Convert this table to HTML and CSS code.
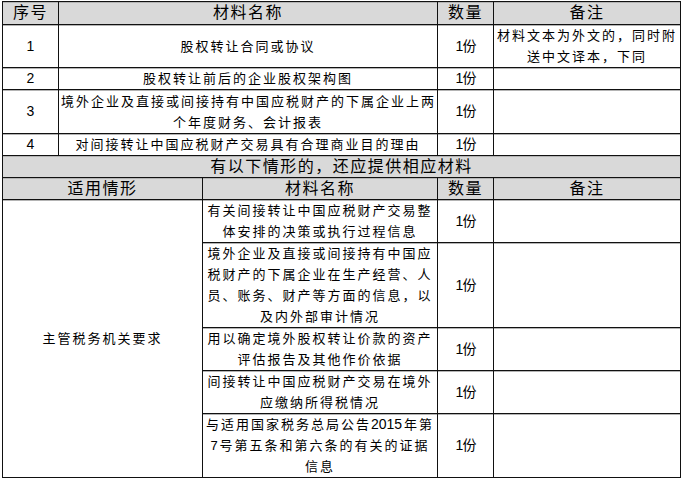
FILE: index.html
```html
<!DOCTYPE html>
<html lang="zh-CN">
<head>
<meta charset="utf-8">
<title>材料清单</title>
<link rel="stylesheet" href="styles.css">
</head>
<body>
<table class="sheet">
  <colgroup>
    <col class="c1"><col class="c2"><col class="c3"><col class="c4"><col class="c5">
  </colgroup>
  <tr class="h23 head">
    <td>序号</td>
    <td colspan="2">材料名称</td>
    <td>数量</td>
    <td>备注</td>
  </tr>
  <tr class="h43">
    <td class="num">1</td>
    <td colspan="2">股权转让合同或协议</td>
    <td class="qty">1份</td>
    <td>材料文本为外文的，同时附<br>送中文译本，下同</td>
  </tr>
  <tr class="h22">
    <td class="num">2</td>
    <td colspan="2">股权转让前后的企业股权架构图</td>
    <td class="qty">1份</td>
    <td></td>
  </tr>
  <tr class="h44">
    <td class="num">3</td>
    <td colspan="2">境外企业及直接或间接持有中国应税财产的下属企业上两<br>个年度财务、会计报表</td>
    <td class="qty">1份</td>
    <td></td>
  </tr>
  <tr class="h22">
    <td class="num">4</td>
    <td colspan="2">对间接转让中国应税财产交易具有合理商业目的理由</td>
    <td class="qty">1份</td>
    <td></td>
  </tr>
  <tr class="h22 head">
    <td colspan="5">有以下情形的，还应提供相应材料</td>
  </tr>
  <tr class="h22 head">
    <td colspan="2">适用情形</td>
    <td>材料名称</td>
    <td>数量</td>
    <td>备注</td>
  </tr>
  <tr class="h43">
    <td colspan="2" rowspan="5">主管税务机关要求</td>
    <td>有关间接转让中国应税财产交易整<br>体安排的决策或执行过程信息</td>
    <td class="qty">1份</td>
    <td></td>
  </tr>
  <tr class="h84">
    <td>境外企业及直接或间接持有中国应<br>税财产的下属企业在生产经营、人<br>员、账务、财产等方面的信息，以<br>及内外部审计情况</td>
    <td class="qty">1份</td>
    <td></td>
  </tr>
  <tr class="h43">
    <td>用以确定境外股权转让价款的资产<br>评估报告及其他作价依据</td>
    <td class="qty">1份</td>
    <td></td>
  </tr>
  <tr class="h43">
    <td>间接转让中国应税财产交易在境外<br>应缴纳所得税情况</td>
    <td class="qty">1份</td>
    <td></td>
  </tr>
  <tr class="h63">
    <td>与适用国家税务总局公告<span class="digits">2015</span>年第<br>7号第五条和第六条的有关的证据<br>信息</td>
    <td class="qty">1份</td>
    <td></td>
  </tr>
</table>
</body>
</html>
```

FILE: styles.css
```css
html, body {
  margin: 0;
  padding: 0;
  background: #fff;
}

body {
  font-family: "Liberation Sans", "Noto Sans CJK SC", sans-serif;
  color: #000;
}

.sheet {
  margin: 1px 0 0 2px;
  border-collapse: collapse;
  table-layout: fixed;
  width: 678px;
}

.c1 { width: 56px; }
.c2 { width: 144px; }
.c3 { width: 235px; }
.c4 { width: 56px; }
.c5 { width: 187px; }

.sheet td {
  border: 1px solid #111;
  padding: 0 2px;
  text-align: center;
  vertical-align: middle;
  font-size: 13px;
  line-height: 21px;
  letter-spacing: 2px;
  white-space: nowrap;
  overflow: hidden;
  box-shadow: inset 0 1px 0 #b4b4b4;
}

.sheet .head td {
  background: #d9d9d9;
  font-size: 16px;
  letter-spacing: 1.5px;
  line-height: 20px;
}

.sheet td.num {
  font-size: 14px;
  letter-spacing: 0;
}

.sheet td.qty {
  font-size: 14px;
  letter-spacing: -1px;
}

.digits {
  font-size: 14px;
  letter-spacing: 0;
  margin-right: 2px;
}

.h22 { height: 22px; }
.h23 { height: 23px; }
.h43 { height: 43px; }
.h44 { height: 44px; }
.h63 { height: 63px; }
.h84 { height: 84px; }
```
